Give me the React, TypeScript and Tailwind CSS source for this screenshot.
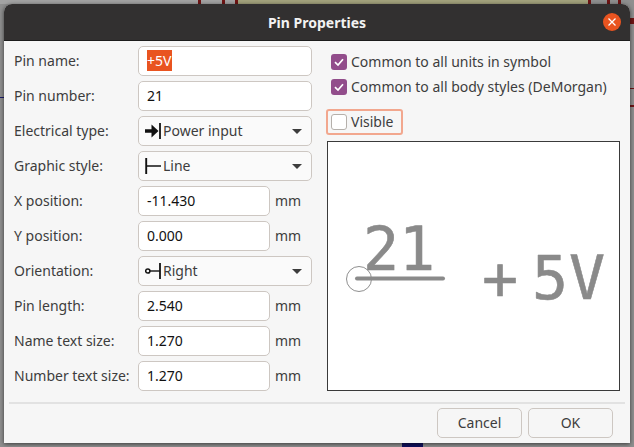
import React from "react";

const labelClass = "w-[124px] shrink-0 pb-[2px] text-[14px] text-[#3d3d3d]";

function PowerInputIcon() {
  return (
    <svg width="17" height="16" viewBox="0 0 17 16" className="shrink-0">
      <path d="M0 8h9" stroke="#111" strokeWidth="3.4" />
      <path d="M6.5 1.5 L13.5 8 L6.5 14.5 Z" fill="#111" />
      <path d="M15 0v16" stroke="#111" strokeWidth="1.8" />
    </svg>
  );
}

function LineIcon() {
  return (
    <svg width="17" height="16" viewBox="0 0 17 16" className="shrink-0">
      <path d="M1.2 0v16" stroke="#111" strokeWidth="1.9" />
      <path d="M1 8h15" stroke="#111" strokeWidth="1.4" />
    </svg>
  );
}

function RightIcon() {
  return (
    <svg width="17" height="16" viewBox="0 0 17 16" className="shrink-0">
      <circle cx="2.8" cy="8" r="2.1" fill="none" stroke="#111" strokeWidth="1.5" />
      <path d="M5 8h10" stroke="#111" strokeWidth="1.4" />
      <path d="M15 0v16" stroke="#111" strokeWidth="1.8" />
    </svg>
  );
}

function TextRow({ label, value }: { label: string; value: string }) {
  return (
    <div className="flex h-[30px] items-center">
      <span className={labelClass}>{label}</span>
      <div className="flex h-[30px] w-[132px] items-center rounded-[5px] border border-[#cdc7c2] bg-white px-[8px] pb-[2px] text-[14px] text-[#111]">
        {value}
      </div>
      <span className="ml-[5px] pb-[1px] text-[14px] text-[#3d3d3d]">mm</span>
    </div>
  );
}

function NameRow() {
  return (
    <div className="flex h-[30px] items-center">
      <span className={labelClass}>Pin name:</span>
      <div className="flex h-[30px] w-[174px] items-center rounded-[5px] border border-[#cdc7c2] bg-white px-[8px] pb-[2px] text-[14px]">
        <span className="bg-[#e95420] pr-[1px] text-white">+5V</span>
      </div>
    </div>
  );
}

function PlainRow({ label, value }: { label: string; value: string }) {
  return (
    <div className="flex h-[30px] items-center">
      <span className={labelClass}>{label}</span>
      <div className="flex h-[30px] w-[174px] items-center rounded-[5px] border border-[#cdc7c2] bg-white px-[8px] pb-[2px] text-[14px] text-[#111]">
        {value}
      </div>
    </div>
  );
}

function SelectRow({ label, value, icon }: { label: string; value: string; icon: React.ReactNode }) {
  return (
    <div className="flex h-[30px] items-center">
      <span className={labelClass}>{label}</span>
      <div className="flex h-[30px] w-[174px] items-center rounded-[5px] border border-[#cdc7c2] bg-[#fafafa] pl-[6px] pr-[9px] text-[14px] text-[#3d3d3d]">
        {icon}
        <span className="ml-[1px] flex-1 pb-[2px]">{value}</span>
        <span className="h-0 w-0 border-x-[5px] border-t-[5px] border-x-transparent border-t-[#3d3d3d]" />
      </div>
    </div>
  );
}

function CheckBox({ label }: { label: string }) {
  return (
    <div className="flex h-[24px] items-center gap-[4px] text-[14px] text-[#3d3d3d]">
      <span className="flex h-[16px] w-[16px] items-center justify-center rounded-[3px] bg-[#924d8b]">
        <svg width="12" height="12" viewBox="0 0 12 12">
          <path d="M2 6.2 L5 9 L10 3.2" fill="none" stroke="#fff" strokeWidth="1.7" />
        </svg>
      </span>
      <span className="pb-[1px]">{label}</span>
    </div>
  );
}

export default function App() {
  return (
    <div className="relative h-[447px] w-[634px] overflow-hidden bg-[#8f8f8f] font-['Noto_Sans',sans-serif]">
      {/* desktop behind the dialog */}
      <div className="absolute left-0 top-0 h-[4px] w-[238px] bg-[#a3a3a3]" />
      <div className="absolute left-[238px] top-0 h-[4px] w-[350px] bg-[#a3a27c]" />
      <div className="absolute left-[198px] top-0 h-[4px] w-[3px] bg-[#6f1414]" />
      <div className="absolute left-[222px] top-0 h-[4px] w-[3px] bg-[#6f1414]" />
      <div className="absolute left-[235px] top-0 h-[4px] w-[3px] bg-[#6f1414]" />
      <div className="absolute left-[588px] top-0 h-[4px] w-[3px] bg-[#6f1414]" />
      <div className="absolute left-[607px] top-0 h-[4px] w-[3px] bg-[#6f1414]" />
      <div className="absolute left-[618px] top-0 h-[4px] w-[3px] bg-[#6f1414]" />
      <div className="absolute left-0 top-[97px] h-[1px] w-[4px] bg-[#1a1a6a]" />
      <div className="absolute left-[630px] top-[18px] h-[6px] w-[4px] bg-[#6f1414]" />
      <div className="absolute left-[630px] top-[88px] h-[1px] w-[4px] bg-[#6f1414]" />
      <div className="absolute left-[630px] top-[105px] h-[2px] w-[4px] bg-[#6f1414]" />
      <div className="absolute left-[402px] top-[443px] h-[4px] w-[21px] bg-[#10105e]" />

      {/* dialog window */}
      <div className="absolute left-[4px] top-[4px] flex h-[439px] w-[626px] flex-col overflow-hidden rounded-t-[8px] bg-[#f6f6f6] shadow-[0_1px_4px_rgba(0,0,0,0.6)]">
        <div className="relative flex h-[37px] shrink-0 items-center justify-center border-b border-[#1c1c1c] bg-[#323030] text-[14px] font-bold text-[#f2f2f2]">
          Pin Properties
          <span className="absolute right-[9px] top-[9px] flex h-[18px] w-[18px] items-center justify-center rounded-full bg-[#e95420]">
            <svg width="10" height="10" viewBox="0 0 10 10">
              <path d="M1.5 1.5 L8.5 8.5 M8.5 1.5 L1.5 8.5" stroke="#fff" strokeWidth="1.3" />
            </svg>
          </span>
        </div>

        <div className="flex flex-1 pl-[10px]">
          <div className="flex w-[312px] shrink-0 flex-col gap-[5px] pt-[5px]">
            <NameRow />
            <PlainRow label="Pin number:" value="21" />
            <SelectRow label="Electrical type:" value="Power input" icon={<PowerInputIcon />} />
            <SelectRow label="Graphic style:" value="Line" icon={<LineIcon />} />
            <TextRow label="X position:" value="-11.430" />
            <TextRow label="Y position:" value="0.000" />
            <SelectRow label="Orientation:" value="Right" icon={<RightIcon />} />
            <TextRow label="Pin length:" value="2.540" />
            <TextRow label="Name text size:" value="1.270" />
            <TextRow label="Number text size:" value="1.270" />
          </div>

          <div className="flex flex-col pl-[1px] pt-[9px]">
            <div className="flex flex-col gap-[1px] pl-[4px]">
              <CheckBox label="Common to all units in symbol" />
              <CheckBox label="Common to all body styles (DeMorgan)" />
            </div>
            <div className="-ml-[1px] mt-[10px] flex h-[26px] w-[77px] items-center gap-[4px] rounded-[3px] border-2 border-[#f2a78e] pl-[3px] text-[14px] text-[#3d3d3d]">
              <span className="h-[16px] w-[16px] rounded-[3px] border border-[#b5b0ab] bg-white" />
              <span className="pb-[1px]">Visible</span>
            </div>
            <div className="mt-[6px] h-[250px] w-[293px] border border-[#3a3a3a] bg-white">
              <svg width="291" height="248" viewBox="0 0 291 248">
                <circle cx="31" cy="137" r="12.5" fill="none" stroke="#8f8f8f" strokeWidth="1" />
                <path d="M29 136.5H115" stroke="#8a8a8a" strokeWidth="4" strokeLinecap="round" />
                <text x="35" y="128" fontFamily="'DejaVu Sans Mono', monospace" fontSize="60" fill="#8a8a8a" stroke="#8a8a8a" strokeWidth="0.6" strokeLinejoin="round">21</text>
                <text x="154 204 241" y="157" fontFamily="'DejaVu Sans Mono', monospace" fontSize="60" fill="#8a8a8a" stroke="#8a8a8a" strokeWidth="0.6" strokeLinejoin="round">+5V</text>
              </svg>
            </div>
          </div>
        </div>

        <div className="mx-[5px] h-[2px] shrink-0 bg-[#e2e2e2]" />
        <div className="flex h-[39px] shrink-0 items-start justify-end gap-[6px] pr-[17px] pt-[4px]">
          <div className="flex h-[30px] w-[85px] items-center justify-center rounded-[5px] border border-[#cdc7c2] bg-[#f6f6f6] pb-[2px] text-[14px] text-[#3d3d3d]">
            Cancel
          </div>
          <div className="flex h-[30px] w-[85px] items-center justify-center rounded-[5px] border border-[#cdc7c2] bg-[#f6f6f6] pb-[2px] text-[14px] text-[#3d3d3d]">
            OK
          </div>
        </div>
      </div>
    </div>
  );
}
